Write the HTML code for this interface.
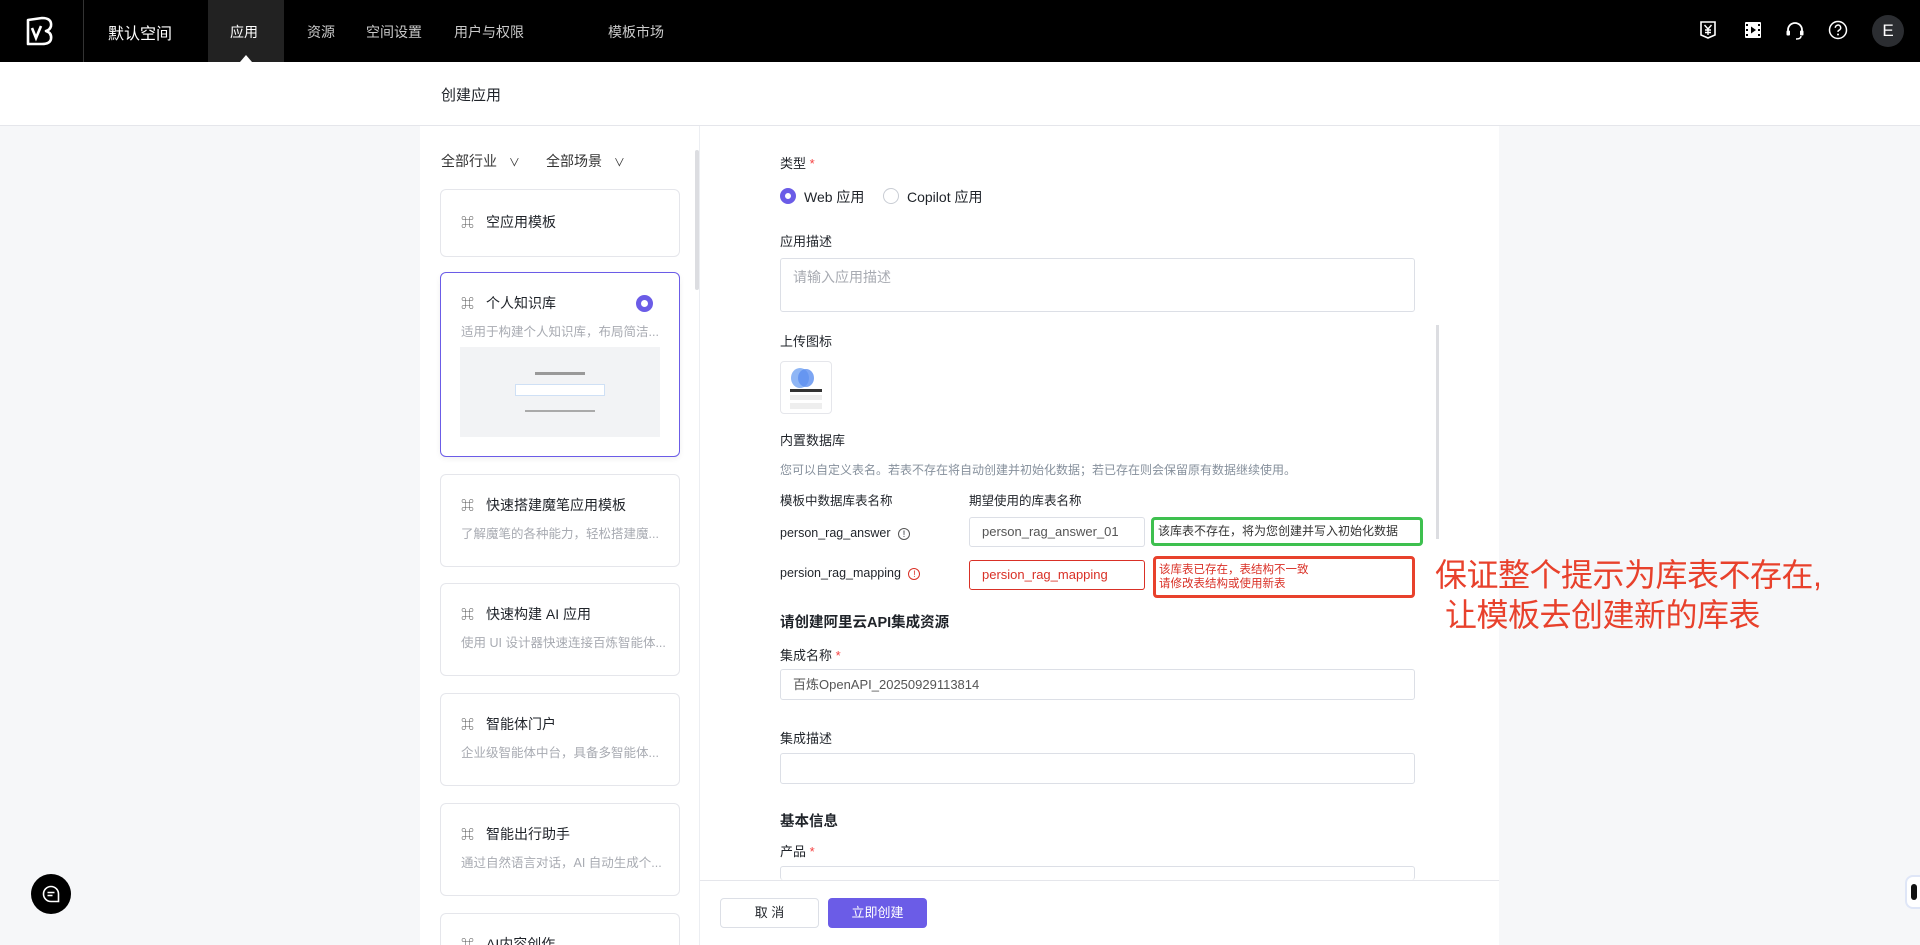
<!DOCTYPE html>
<html><head><meta charset="utf-8">
<style>
*{box-sizing:border-box;margin:0;padding:0}
html,body{width:1920px;height:945px;overflow:hidden}
body{background:#f5f6f8;font-family:"Liberation Sans","Noto Sans CJK SC",sans-serif;color:#1f2329}
#w{position:relative;width:1920px;height:945px;overflow:hidden;background:#f6f7f9}
.a{position:absolute}
.nav{left:0;top:0;width:1920px;height:62px;background:#000}
.nav .t{color:#c9c9c9;font-size:14px;top:22px}
.hdr{left:0;top:62px;width:1920px;height:64px;background:#fff;border-bottom:1px solid #e5e6eb}
.panel{left:420px;top:126px;width:1079px;height:819px;background:#fff}
.card{left:440px;width:240px;background:#fff;border:1px solid #e5e6eb;border-radius:6px}
.card .ti{position:absolute;left:20px;top:20px;font-size:14px;color:#1f2329}
.card .ti b{font-weight:normal;color:#555;margin-right:12px;font-size:13px}
.card .de{position:absolute;left:20px;top:48px;font-size:12.5px;color:#a8abb2;white-space:nowrap}
.lb{left:780px;font-size:13px;color:#1f2329}
.inp{border:1px solid #dcdfe6;border-radius:3px;background:#fff;font-size:13px;color:#86909c;padding-left:12px}
.req{color:#f53f3f}
</style></head><body><div id="w">
<div class="a nav">
  <svg class="a" style="left:24px;top:16px" width="32" height="30" viewBox="0 0 32 30"><path d="M4 4 L18 2 Q28 2 27 10 Q26 14 22 15 Q28 17 27 23 Q26 28 18 28 L4 28 Z" fill="none" stroke="#fff" stroke-width="2.6" stroke-linejoin="round"/><path d="M8 12 L12 22 L17 10" fill="none" stroke="#fff" stroke-width="2.6"/></svg>
  <div class="a" style="left:83px;top:0;width:1px;height:62px;background:#333"></div>
  <div class="a t" style="left:108px;top:20px;color:#fff;font-size:16px">默认空间</div>
  <div class="a" style="left:208px;top:0;width:76px;height:62px;background:#222"></div>
  <div class="a" style="left:240px;top:55px;width:0;height:0;border-left:6px solid transparent;border-right:6px solid transparent;border-bottom:7px solid #fff"></div>
  <div class="a t" style="left:230px;color:#fff">应用</div>
  <div class="a t" style="left:307px">资源</div>
  <div class="a t" style="left:366px">空间设置</div>
  <div class="a t" style="left:454px">用户与权限</div>
  <div class="a t" style="left:608px">模板市场</div>
  <svg class="a" style="left:1699px;top:20px" width="18" height="20" viewBox="0 0 18 20"><path d="M2 2h14v13l-7 3-7-3z" fill="none" stroke="#fff" stroke-width="1.6"/><path d="M5.5 5l3.5 4 3.5-4M9 9v6M6 10h6M6 12.5h6" stroke="#fff" stroke-width="1.4" fill="none"/></svg>
  <svg class="a" style="left:1744px;top:21px" width="18" height="18" viewBox="0 0 18 18"><rect x="1" y="1" width="16" height="16" rx="1" fill="#fff"/><path d="M7 5.5v7l5-3.5z" fill="#000"/><rect x="2" y="3" width="2" height="2" fill="#000"/><rect x="2" y="8" width="2" height="2" fill="#000"/><rect x="2" y="13" width="2" height="2" fill="#000"/><rect x="14" y="3" width="2" height="2" fill="#000"/><rect x="14" y="8" width="2" height="2" fill="#000"/><rect x="14" y="13" width="2" height="2" fill="#000"/></svg>
  <svg class="a" style="left:1785px;top:21px" width="20" height="20" viewBox="0 0 20 20"><path d="M3 11V9a7 7 0 0 1 14 0v2" fill="none" stroke="#fff" stroke-width="1.8"/><rect x="1.5" y="9.5" width="3.5" height="5" rx="1" fill="#fff"/><rect x="15" y="9.5" width="3.5" height="5" rx="1" fill="#fff"/><path d="M16 15q0 3-5 3" fill="none" stroke="#fff" stroke-width="1.5"/></svg>
  <svg class="a" style="left:1828px;top:20px" width="20" height="20" viewBox="0 0 20 20"><circle cx="10" cy="10" r="8.5" fill="none" stroke="#fff" stroke-width="1.5"/><path d="M7.3 7.8a2.7 2.7 0 1 1 3.6 2.5c-.7.3-.9.8-.9 1.6" fill="none" stroke="#fff" stroke-width="1.5"/><circle cx="10" cy="14.5" r="1" fill="#fff"/></svg>
  <div class="a" style="left:1872px;top:15px;width:32px;height:32px;border-radius:50%;background:#2b2d31;color:#fff;font-size:17px;text-align:center;line-height:32px">E</div>
</div>
<div class="a hdr"><div class="a" style="left:441px;top:22px;font-size:15px">创建应用</div></div>
<div class="a panel"></div>
<div class="a" style="left:441px;top:151px;font-size:14px;color:#333">全部行业 <span style="margin-left:8px;font-size:11px">&#8744;</span></div>
<div class="a" style="left:546px;top:151px;font-size:14px;color:#333">全部场景 <span style="margin-left:8px;font-size:11px">&#8744;</span></div>
<div class="a" style="left:695px;top:150px;width:4px;height:140px;background:#dcdde1;border-radius:2px"></div>
<div class="a" style="left:699px;top:126px;width:1px;height:819px;background:#eceef2"></div>
<div class="a card" style="top:189px;height:68px"><div class="ti" style="top:22px"><b>⌘</b>空应用模板</div></div>
<div class="a card" style="top:272px;height:185px;border-color:#6b5ce7;box-shadow:0 2px 6px rgba(0,0,0,.06)"><div class="ti"><b>⌘</b>个人知识库</div>
  <div class="a" style="left:195px;top:22px;width:17px;height:17px;border-radius:50%;border:5px solid #6b5ce7;background:#fff"></div>
  <div class="de">适用于构建个人知识库，布局简洁...</div>
  <div class="a" style="left:19px;top:74px;width:200px;height:90px;background:#f2f3f5">
    <div class="a" style="left:75px;top:25px;width:50px;height:3px;background:#999"></div>
    <div class="a" style="left:55px;top:37px;width:90px;height:12px;border:1px solid #cfe0f5;background:#fff"></div>
    <div class="a" style="left:65px;top:63px;width:70px;height:2px;background:#aaa"></div>
  </div>
</div>
<div class="a card" style="top:474px;height:93px"><div class="ti"><b>⌘</b>快速搭建魔笔应用模板</div><div class="de">了解魔笔的各种能力，轻松搭建魔...</div></div>
<div class="a card" style="top:583px;height:93px"><div class="ti"><b>⌘</b>快速构建 AI 应用</div><div class="de">使用 UI 设计器快速连接百炼智能体...</div></div>
<div class="a card" style="top:693px;height:93px"><div class="ti"><b>⌘</b>智能体门户</div><div class="de">企业级智能体中台，具备多智能体...</div></div>
<div class="a card" style="top:803px;height:93px"><div class="ti"><b>⌘</b>智能出行助手</div><div class="de">通过自然语言对话，AI 自动生成个...</div></div>
<div class="a card" style="top:913px;height:32px;border-bottom:none;border-radius:6px 6px 0 0"><div class="ti"><b>⌘</b>AI内容创作</div></div>

<div class="a lb" style="top:153px">类型 <span class="req">*</span></div>
<div class="a" style="left:780px;top:188px;width:16px;height:16px;border-radius:50%;border:5px solid #6b5ce7"></div>
<div class="a lb" style="left:804px;top:187px;font-size:14px">Web 应用</div>
<div class="a" style="left:883px;top:188px;width:16px;height:16px;border-radius:50%;border:1px solid #c9cdd4"></div>
<div class="a lb" style="left:907px;top:187px;font-size:14px">Copilot 应用</div>
<div class="a lb" style="top:231px">应用描述</div>
<div class="a inp" style="left:780px;top:258px;width:635px;height:54px;padding-top:8px;font-size:14px;color:#a8abb2">请输入应用描述</div>
<div class="a lb" style="top:331px">上传图标</div>
<div class="a" style="left:780px;top:361px;width:52px;height:53px;border:1px solid #e5e6eb;border-radius:4px;background:#fff">
  <div class="a" style="left:10px;top:6px;width:18px;height:20px;border-radius:50%;background:#8fb6f5"></div>
  <div class="a" style="left:17px;top:7px;width:16px;height:18px;border-radius:50%;background:#5b8ff0;opacity:.8"></div>
  <div class="a" style="left:9px;top:27px;width:32px;height:3px;background:#333"></div>
  <div class="a" style="left:9px;top:33px;width:32px;height:5px;background:#eee"></div>
  <div class="a" style="left:9px;top:41px;width:32px;height:6px;background:#eee"></div>
</div>
<div class="a lb" style="top:430px">内置数据库</div>
<div class="a" style="left:780px;top:461px;font-size:12px;color:#86909c">您可以自定义表名。若表不存在将自动创建并初始化数据；若已存在则会保留原有数据继续使用。</div>
<div class="a lb" style="top:490px;font-size:12.5px">模板中数据库表名称</div>
<div class="a lb" style="left:969px;top:490px;font-size:12.5px">期望使用的库表名称</div>
<div class="a lb" style="top:526px;font-size:12.5px">person_rag_answer <span style="display:inline-block;width:12px;height:12px;border:1px solid #555;border-radius:50%;font-size:9px;text-align:center;line-height:10px;margin-left:4px">!</span></div>
<div class="a inp" style="left:969px;top:517px;width:176px;height:30px;line-height:28px;font-size:13px;color:#555">person_rag_answer_01</div>
<div class="a" style="left:1151px;top:517px;width:272px;height:29px;border:3px solid #3ec04f;border-radius:4px;font-size:12px;color:#333;line-height:23px;padding-left:4px">该库表不存在，将为您创建并写入初始化数据</div>
<div class="a lb" style="top:566px;font-size:12.5px">persion_rag_mapping <span style="display:inline-block;width:12px;height:12px;border:1px solid #d93026;color:#d93026;border-radius:50%;font-size:9px;text-align:center;line-height:10px;margin-left:4px">!</span></div>
<div class="a inp" style="left:969px;top:560px;width:176px;height:30px;line-height:28px;border-color:#d93026;color:#d93026">persion_rag_mapping</div>
<div class="a" style="left:1153px;top:556px;width:262px;height:42px;border:3px solid #e8412c;border-radius:4px;font-size:11.5px;color:#d93026;line-height:14px;padding:4px 0 0 3px">该库表已存在，表结构不一致<br>请修改表结构或使用新表</div>
<div class="a" style="left:1435px;top:550px;font-size:32px;color:#e8412c;white-space:nowrap;letter-spacing:-0.5px">保证整个提示为库表不存在,</div>
<div class="a" style="left:1445px;top:590px;font-size:32px;color:#e8412c;white-space:nowrap;letter-spacing:-0.5px">让模板去创建新的库表</div>
<div class="a" style="left:1436px;top:325px;width:3px;height:214px;background:#dcdde1"></div>
<div class="a lb" style="top:611px;font-size:14.5px;font-weight:bold">请创建阿里云API集成资源</div>
<div class="a lb" style="top:645px">集成名称 <span class="req">*</span></div>
<div class="a inp" style="left:780px;top:669px;width:635px;height:31px;line-height:29px;color:#555">百炼OpenAPI_20250929113814</div>
<div class="a lb" style="top:728px">集成描述</div>
<div class="a inp" style="left:780px;top:753px;width:635px;height:31px"></div>
<div class="a lb" style="top:810px;font-size:14.5px;font-weight:bold">基本信息</div>
<div class="a lb" style="top:841px">产品 <span class="req">*</span></div>
<div class="a inp" style="left:780px;top:866px;width:635px;height:14px;border-bottom:none"></div>
<div class="a" style="left:700px;top:880px;width:799px;height:65px;background:#fff;border-top:1px solid #e5e6eb"></div>
<div class="a" style="left:720px;top:898px;width:99px;height:30px;border:1px solid #dcdfe6;border-radius:4px;background:#fff;text-align:center;line-height:28px;font-size:13px">取 消</div>
<div class="a" style="left:828px;top:898px;width:99px;height:30px;border-radius:4px;background:#6b5ce7;color:#fff;text-align:center;line-height:30px;font-size:13px">立即创建</div>
<div class="a" style="left:31px;top:874px;width:40px;height:40px;border-radius:50%;background:#000"><svg style="position:absolute;left:11px;top:11px" width="18" height="18" viewBox="0 0 18 18"><path d="M9 1.5a7.5 7.5 0 1 0 0 15h7.5V9A7.5 7.5 0 0 0 9 1.5z" fill="none" stroke="#fff" stroke-width="1.6"/><path d="M5.5 7.5h7M5.5 10.5h5" stroke="#fff" stroke-width="1.5"/></svg></div>
<div class="a" style="left:1905px;top:875px;width:15px;height:34px;border-radius:8px 0 0 8px;background:#fff;border:2px solid #dfe6f7;border-right:none"><div class="a" style="left:4px;top:7px;width:6px;height:16px;border-radius:3px;background:#111"></div></div>
</div></body></html>
